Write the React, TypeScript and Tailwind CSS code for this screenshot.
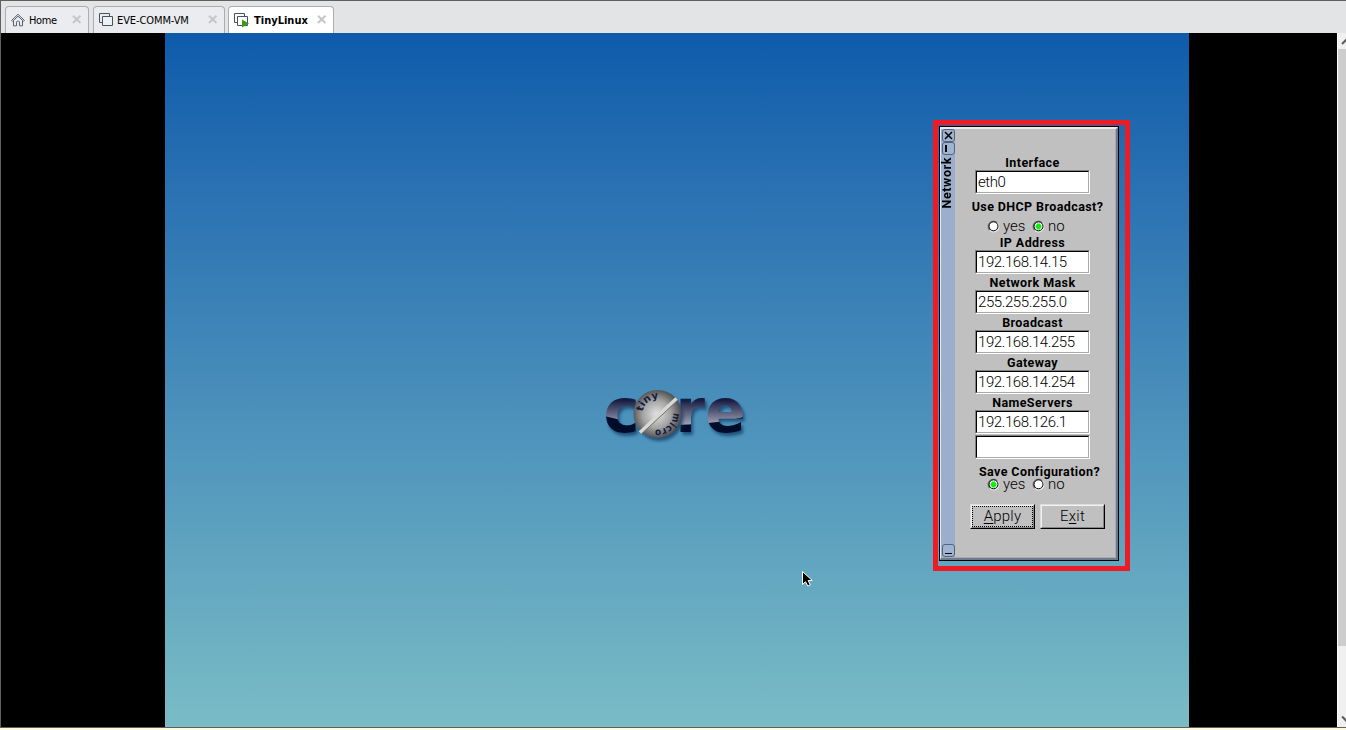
import React from "react";

type TabKind = "home" | "vm" | "running";

function TabIcon({ kind }: { kind: TabKind }) {
  if (kind === "home") {
    return (
      <svg width="14" height="14" viewBox="0 0 14 14" fill="none" stroke="#536371" strokeWidth="1" className="shrink-0">
        <path d="M.6 7.4 7 1.3l6.4 6.1-.9.9L7 3.2 1.5 8.3z" fill="#f3f4f5" />
        <path d="M2.500 7.800v5h3V9.200q0-1 1-1h1q1 0 1 1v3.600h3v-5" />
      </svg>
    );
  }
  return (
    <svg width="16" height="16" viewBox="0 0 16 16" fill="none" stroke="#435462" className="shrink-0">
      <path d="M3 10.500H.5V1.500h10V4" />
      <path d="M3.500 4.500h10v9h-10z" fill={kind === "running" ? "#fff" : "#f0f1f3"} />
      {kind === "running" && <path d="M8 7.500 15 11.500 8 15.500z" fill="#3c9b12" stroke="none" />}
    </svg>
  );
}

function CloseIcon() {
  return (
    <svg width="10" height="9" viewBox="0 0 10 9" stroke="#c6c6c8" strokeWidth="2" className="shrink-0">
      <path d="M1 .7 8.400 8M8.400 .7 1 8" />
    </svg>
  );
}

function Tab({ kind, label, className, labelClass }: { kind: TabKind; label: string; className: string; labelClass: string }) {
  return (
    <div className={`flex h-[27px] items-center rounded-t-[4px] border border-b-0 border-[#adadb0] pl-[5px] text-[11px] text-black ${className}`}>
      <TabIcon kind={kind} />
      <span className={`whitespace-nowrap pt-[2px] ${labelClass}`}>{label}</span>
      <span className="mr-[6px] mb-[2px] ml-auto">
        <CloseIcon />
      </span>
    </div>
  );
}

function Label({ children, className = "" }: { children: string; className?: string }) {
  return (
    <div className={`flex h-4 items-center justify-center whitespace-nowrap pt-[2px] text-[12.5px] leading-[14px] font-bold tracking-[0.4px] ${className}`}>
      {children}
    </div>
  );
}

function Field({ value }: { value: string }) {
  return (
    <div className="h-6 w-[115px] border border-t-[#808080] border-r-white border-b-white border-l-[#808080]">
      <div className="flex h-full items-center border border-t-black border-r-[#a9a9a9] border-b-[#a9a9a9] border-l-black bg-white pl-[1px]">
        <span className="whitespace-nowrap text-[15px] font-light tracking-[-0.4px]">{value}</span>
      </div>
    </div>
  );
}

function Radio({ on }: { on: boolean }) {
  return (
    <svg width="13" height="13" viewBox="0 0 13 13" className="shrink-0">
      <circle cx="6.500" cy="6.500" r="6" fill="#e8e8e8" />
      <path d="M10.800 2.200A6 6 0 0 0 2.200 10.800z" fill="#777" />
      <circle cx="6.500" cy="6.300" r="4.500" fill="#fff" stroke="#000" />
      {on && <path d="M5 3.500h3v1h1v1h.5v2H9v1H8v1H5v-1H4v-1h-.5v-2H4v-1h1z" fill="#0df00d" />}
    </svg>
  );
}

function YesNo({ yes }: { yes: boolean }) {
  return (
    <div className="flex h-[15px] items-center pl-[32px] text-[15px] leading-[15px] font-light">
      <Radio on={yes} />
      <span className="ml-[3px] w-[29px]">yes</span>
      <Radio on={!yes} />
      <span className="ml-[3px]">no</span>
    </div>
  );
}

function Button({ before = "", mark, after, focused = false }: { before?: string; mark: string; after: string; focused?: boolean }) {
  return (
    <div className="h-[25px] w-[65px] border border-t-[#dcdcdc] border-r-black border-b-black border-l-[#dcdcdc]">
      <div className="h-full border border-t-[#f2f2f2] border-r-[#858585] border-b-[#858585] border-l-[#f2f2f2]">
        <div className={`flex h-full items-center justify-center text-[15px] font-light tracking-[0.2px] ${focused ? "border border-dotted border-black" : ""}`}>
          <span>
            {before}
            <span className="underline underline-offset-[2px]">{mark}</span>
            {after}
          </span>
        </div>
      </div>
    </div>
  );
}

function StripButton({ children }: { children: React.ReactNode }) {
  return (
    <svg width="13" height="13" viewBox="0 0 13 13" className="block shrink-0">
      <rect x=".5" y=".5" width="12" height="12" rx="2.500" fill="#9fb4d1" stroke="#52647d" />
      {children}
    </svg>
  );
}

function NetworkWindow() {
  return (
    <div className="absolute top-[120px] left-[933px] h-[451px] w-[197px] border-[5px] border-[#ee1b24] pt-[1px] pl-[1px] font-['Roboto','Liberation_Sans',sans-serif] text-black">
      <div className="h-[435px] w-[180px] border border-black">
        <div className="flex h-full border-t-2 border-r-2 border-b-2 border-l border-t-[#e9edf2] border-r-[#727984] border-b-[#727984] border-l-[#e4eaf2]">
          <div className="flex w-[14px] shrink-0 flex-col items-center bg-[#9bafcd]">
            <StripButton>
              <path d="M3 3l7 7M10 3l-7 7" stroke="#000" strokeWidth="1.500" />
            </StripButton>
            <StripButton>
              <rect x="3" y="3" width="2" height="7" fill="#000" />
            </StripButton>
            <span className="mt-[2px] mr-[2px] rotate-180 text-[12.5px] leading-[14px] font-bold tracking-[0.6px] [writing-mode:vertical-rl]">Network</span>
            <div className="mt-auto mb-px">
              <StripButton>
                <rect x="3" y="9" width="7" height="1" fill="#000" />
              </StripButton>
            </div>
          </div>
          <div className="flex grow flex-col border-r border-b border-[#a0abbc] bg-[#c0c0c0] pt-[25px]">
            <div className="flex w-[155px] flex-col items-center">
              <Label>Interface</Label>
              <Field value="eth0" />
              <div className="h-[4px]" />
              <Label className="pl-[10px]">Use DHCP Broadcast?</Label>
              <div className="mt-[5px] w-full">
                <YesNo yes={false} />
              </div>
              <Label>IP Address</Label>
              <Field value="192.168.14.15" />
              <Label>Network Mask</Label>
              <Field value="255.255.255.0" />
              <Label>Broadcast</Label>
              <Field value="192.168.14.255" />
              <Label>Gateway</Label>
              <Field value="192.168.14.254" />
              <Label>NameServers</Label>
              <Field value="192.168.126.1" />
              <div className="h-px" />
              <Field value="" />
              <div className="h-[4px]" />
              <Label className="pl-[14px]">Save Configuration?</Label>
              <div className="-mt-[2px] w-full">
                <YesNo yes={true} />
              </div>
              <div className="mt-[12px] flex gap-[5px] pl-[10px]">
                <Button mark="A" after="pply" focused />
                <Button before="E" mark="x" after="it" />
              </div>
            </div>
          </div>
        </div>
      </div>
    </div>
  );
}

function CoreLogo() {
  return (
    <svg width="160" height="100" viewBox="596 360 160 100" className="absolute top-[327px] left-[431px]">
      <defs>
        <linearGradient id="gloss" x1="0" y1="0" x2="0" y2="1">
          <stop offset="0" stopColor="#050a2c" />
          <stop offset=".2" stopColor="#1b2045" />
          <stop offset="1" stopColor="#b4b5c6" />
        </linearGradient>
        <pattern id="letters" patternUnits="userSpaceOnUse" x="596" y="360" width="160" height="100">
          <rect x="0" y="34" width="160" height="34" fill="url(#gloss)" />
          <path d="M0 54Q80 76 160 54V100H0Z" fill="#050a2c" />
        </pattern>
        <radialGradient id="ball" cx=".48" cy=".5" r=".52">
          <stop offset="0" stopColor="#e2e2e2" />
          <stop offset=".55" stopColor="#a5a5a5" />
          <stop offset="1" stopColor="#4c4c4c" />
        </radialGradient>
        <filter id="shade" x="-20%" y="-20%" width="140%" height="150%">
          <feDropShadow dx="2" dy="3" stdDeviation="1.800" floodColor="#123e68" floodOpacity=".75" />
        </filter>
        <path id="upper" d="M642.700 411.600A15 15 0 0 1 659.500 399" />
        <path id="lower" d="M673 412.800A15.700 15.700 0 0 1 653.800 429.300" />
      </defs>
      <g filter="url(#shade)" fontFamily="DejaVu Sans" fontWeight="700" fontSize="61" fill="url(#letters)">
        <text x="603.500" y="431.500">c</text>
        <text x="675.500" y="431.500" textLength="70" lengthAdjust="spacingAndGlyphs">re</text>
      </g>
      <g filter="url(#shade)">
        <circle cx="657.500" cy="414" r="24" fill="url(#ball)" />
      </g>
      <path d="M640 432.500 676.500 398.500" stroke="#d8d8d5" strokeWidth="3.500" />
      <path d="M641.500 434 677.500 400.500" stroke="#77736f" strokeWidth="1" />
      <g fontFamily="DejaVu Sans" fontWeight="700" fontSize="10" fill="#141b43">
        <text>
          <textPath href="#upper" textLength="22" lengthAdjust="spacingAndGlyphs">tiny</textPath>
        </text>
        <text>
          <textPath href="#lower" textLength="28" lengthAdjust="spacingAndGlyphs">micro</textPath>
        </text>
      </g>
    </svg>
  );
}

export default function App() {
  return (
    <div className="relative flex h-[730px] w-[1346px] flex-col overflow-hidden bg-[#fdfbdc]">
      <div className="flex h-[728px] flex-col border-t border-b border-l border-[#5f5f63]">
        <header className="flex h-8 shrink-0 items-end bg-[#e3e4e6] pl-1 font-['DejaVu_Sans_Condensed','Noto_Sans',sans-serif]">
          <Tab kind="home" label="Home" className="w-[84px] bg-[#ebecef]" labelClass="ml-[4px] tracking-[-0.4px]" />
          <Tab kind="vm" label="EVE-COMM-VM" className="ml-1 w-[132px] bg-[#ebecef]" labelClass="ml-[2px] tracking-[-0.1px]" />
          <Tab kind="running" label="TinyLinux" className="ml-[3px] w-[106px] bg-white" labelClass="ml-[4px] font-bold" />
        </header>
        <main className="flex min-h-0 grow bg-black">
          <div className="relative ml-[164px] h-full w-[1024px] bg-linear-to-b from-[#0e5bab] to-[#7abcc5]">
            <CoreLogo />
            <svg width="14" height="19" viewBox="0 0 14 19" className="absolute top-[537px] left-[636px]">
              <path d="M1.500 1.500v13l3-2.800 2.300 4.300 2.500-1-2.100-4.500h4.100z" fill="#000" stroke="#fff" strokeWidth="1" />
            </svg>
          </div>
          <aside className="ml-auto flex w-[9px] flex-col overflow-hidden border-l border-white bg-[#f0f0f0]">
            <svg width="8" height="16" viewBox="0 0 8 16" fill="none" stroke="#5c5c5c" strokeWidth="2" className="shrink-0">
              <path d="M4 11 9 6" />
            </svg>
            <div className="h-[597px] bg-[#cdcdcd]" />
            <svg width="8" height="16" viewBox="0 0 8 16" fill="none" stroke="#5c5c5c" strokeWidth="2" className="mt-auto shrink-0">
              <path d="M4 5.500 9 10.500" />
            </svg>
          </aside>
        </main>
      </div>
      <NetworkWindow />
    </div>
  );
}
